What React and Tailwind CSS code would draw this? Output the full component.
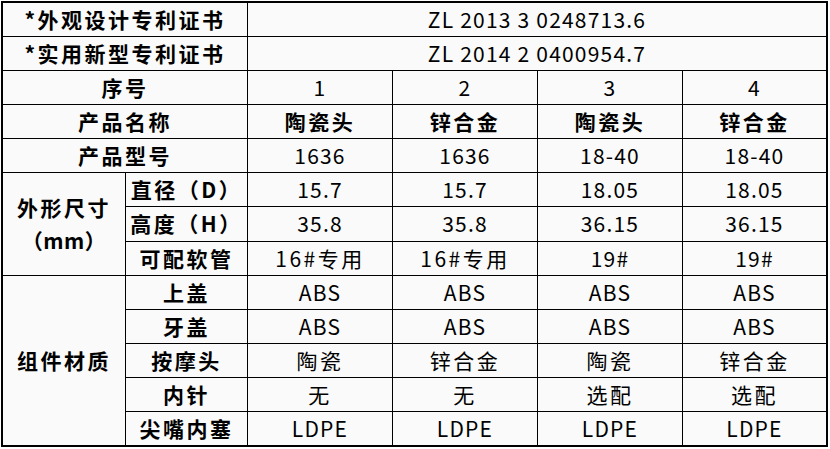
import React from 'react';

const base = 'bg-[#f9faf9] flex items-center justify-center text-black whitespace-nowrap';
const label = base + ' font-bold tracking-[2.5px]';

// latin values are tracked tighter than chinese ones
function valueClass(v, bold) {
    const cjk = /[\u4e00-\u9fff]/.test(v);
    return base + (cjk ? ' tracking-[2.5px]' : ' tracking-[1.2px]') + (bold ? ' font-bold' : '');
}

const cols = ['1', '2', '3', '4'];

const simpleRows = [
    { name: '产品名称', values: ['陶瓷头', '锌合金', '陶瓷头', '锌合金'], bold: true },
    { name: '产品型号', values: ['1636', '1636', '18-40', '18-40'] },
];

const sizeRows = [
    { name: '直径（D）', values: ['15.7', '15.7', '18.05', '18.05'] },
    { name: '高度（H）', values: ['35.8', '35.8', '36.15', '36.15'] },
    { name: '可配软管', values: ['16#专用', '16#专用', '19#', '19#'] },
];

const partRows = [
    { name: '上盖', values: ['ABS', 'ABS', 'ABS', 'ABS'] },
    { name: '牙盖', values: ['ABS', 'ABS', 'ABS', 'ABS'] },
    { name: '按摩头', values: ['陶瓷', '锌合金', '陶瓷', '锌合金'] },
    { name: '内针', values: ['无', '无', '选配', '选配'] },
    { name: '尖嘴内塞', values: ['LDPE', 'LDPE', 'LDPE', 'LDPE'] },
];

function App() {
    return (
        <div className="w-[830px] h-[449px] bg-white pt-px pl-px" style={{ fontFamily: '"Noto Sans CJK SC", "Noto Sans", sans-serif' }}>
            <div className="w-[827px] h-[446px] border-2 border-black bg-black grid gap-px grid-cols-[122px_121px_144px_144px_144px_143px] grid-rows-[repeat(13,minmax(0,1fr))] text-[21px] leading-none">
                <div className={label + ' col-span-2 tracking-[1.5px]'}>*外观设计专利证书</div>
                <div className={valueClass('ZL') + ' col-span-4'}>ZL 2013 3 0248713.6</div>
                <div className={label + ' col-span-2 tracking-[1.5px]'}>*实用新型专利证书</div>
                <div className={valueClass('ZL') + ' col-span-4'}>ZL 2014 2 0400954.7</div>

                <div className={label + ' col-span-2'}>序号</div>
                {cols.map((c) => (
                    <div key={c} className={valueClass(c)}>{c}</div>
                ))}

                {simpleRows.map((r) => (
                    <React.Fragment key={r.name}>
                        <div className={label + ' col-span-2'}>{r.name}</div>
                        {r.values.map((v, i) => (
                            <div key={i} className={valueClass(v, r.bold)}>{v}</div>
                        ))}
                    </React.Fragment>
                ))}

                <div className={label + ' row-span-3 flex-col gap-[12px]'}>
                    <span>外形尺寸</span>
                    <span className="tracking-[0.5px]">（mm）</span>
                </div>
                {sizeRows.map((r) => (
                    <React.Fragment key={r.name}>
                        <div className={label + ' tracking-[1px]'}>{r.name}</div>
                        {r.values.map((v, i) => (
                            <div key={i} className={valueClass(v)}>{v}</div>
                        ))}
                    </React.Fragment>
                ))}

                <div className={label + ' row-span-5'}>组件材质</div>
                {partRows.map((r) => (
                    <React.Fragment key={r.name}>
                        <div className={label}>{r.name}</div>
                        {r.values.map((v, i) => (
                            <div key={i} className={valueClass(v)}>{v}</div>
                        ))}
                    </React.Fragment>
                ))}
            </div>
        </div>
    );
}

export default App;
